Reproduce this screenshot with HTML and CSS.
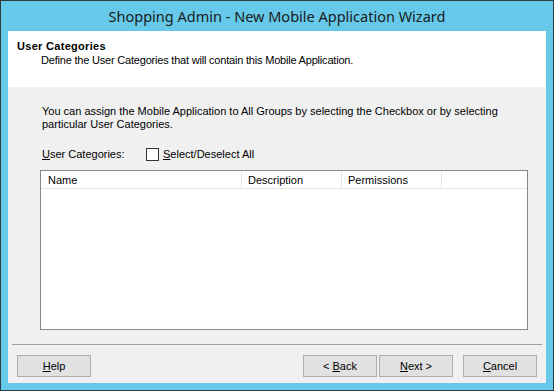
FILE: index.html
```html
<!DOCTYPE html>
<html lang="en">
<head>
  <meta charset="UTF-8">
  <title>Shopping Admin - New Mobile Application Wizard</title>
  <link rel="stylesheet" href="styles.css">
</head>
<body>

  <div class="window">
    <div class="titlebar">Shopping Admin - New Mobile Application Wizard</div>

    <div class="client">
      <div class="header">
        <div class="header-title">User Categories</div>
        <div class="header-sub">Define the User Categories that will contain this Mobile Application.</div>
      </div>

      <div class="body">
        <p class="intro">You can assign the Mobile Application to All Groups by selecting the Checkbox or by selecting<br>particular User Categories.</p>

        <div class="cat-row">
          <span class="cat-label"><u>U</u>ser Categories:</span>
          <label class="check">
            <span class="box"></span>
            <span><u>S</u>elect/Deselect All</span>
          </label>
        </div>

        <div class="list">
          <div class="list-head">
            <div class="col col-name">Name</div>
            <div class="col col-desc">Description</div>
            <div class="col col-perm">Permissions</div>
          </div>
        </div>
      </div>

      <div class="footer">
        <div class="separator"></div>
        <div class="buttons">
          <button class="btn"><u>H</u>elp</button>
          <div class="spacer"></div>
          <button class="btn">&lt; <u>B</u>ack</button>
          <button class="btn btn-next"><u>N</u>ext &gt;</button>
          <button class="btn btn-cancel"><u>C</u>ancel</button>
        </div>
      </div>
    </div>
  </div>

</body>
</html>
```

FILE: styles.css
```css
body {
  margin: 0;
  padding: 0;
  font-family: "Liberation Sans", Arial, sans-serif;
  font-size: 11px;
  color: #000;
}
.window {
  width: 554px;
  height: 391px;
  box-sizing: border-box;
  border: 1px solid #2f3a40;
  background-color: #66c9e9; /* рамка окна */
  padding: 0 7px 7px 7px;
}
.titlebar {
  height: 30px;
  line-height: 30px;
  text-align: center;
  font-family: "Noto Sans", sans-serif;
  font-size: 14.5px;
  color: #1b1b1b;
}
.client {
  height: 352px;
  background-color: #f0f0f0;
  display: flex;
  flex-direction: column;
}
.header {
  height: 56px;
  box-sizing: border-box;
  background-color: #fff;
  padding: 9px 0 0 9px;
  line-height: 13px;
}
.header-title {
  font-weight: bold;
  letter-spacing: 0.3px;
}
.header-sub {
  margin-top: 1px;
  padding-left: 24px;
  letter-spacing: -0.2px;
}
.body {
  padding: 18px 0 0 32px;
}
.intro {
  margin: 0 0 0 2px;
  line-height: 13px;
}
.cat-row {
  display: flex;
  align-items: center;
  height: 16px;
  margin: 15px 0 0 2px;
}
.cat-label {
  width: 104px;
}
.check {
  display: flex;
  align-items: center;
  gap: 4px;
}
.box {
  width: 13px;
  height: 13px;
  box-sizing: border-box;
  border: 1px solid #333;
  background-color: #fff;
}
.list {
  width: 488px;
  height: 160px;
  box-sizing: border-box;
  margin-top: 8px;
  border: 1px solid #828790;
  background-color: #fff;
}
.list-head {
  display: flex;
  height: 18px;
  box-sizing: border-box;
  border-bottom: 1px solid #e5e5e5;
}
.col {
  box-sizing: border-box;
  border-right: 1px solid #e5e5e5;
  padding: 3px 0 0 7px;
  line-height: 13px;
}
.col-name {
  width: 201px;
}
.col-desc {
  width: 100px;
  padding-left: 6px;
}
.col-perm {
  width: 100px;
  padding-left: 6px;
}
.footer {
  margin-top: 14px;
}
.separator {
  margin: 0 4px;
  border-top: 1px solid #a0a0a0;
}
.buttons {
  display: flex;
  margin-top: 10px;
  padding: 0 9px;
}
.spacer {
  flex: 1;
}
.btn {
  width: 74px;
  height: 22px;
  box-sizing: border-box;
  border: 1px solid #adadad;
  background-color: #e1e1e1;
  font-family: "Liberation Sans", Arial, sans-serif;
  font-size: 11px;
  color: #000;
  padding: 0;
  margin: 0;
}
.btn-next {
  margin-left: 2px;
}
.btn-cancel {
  margin-left: 10px;
}
```
